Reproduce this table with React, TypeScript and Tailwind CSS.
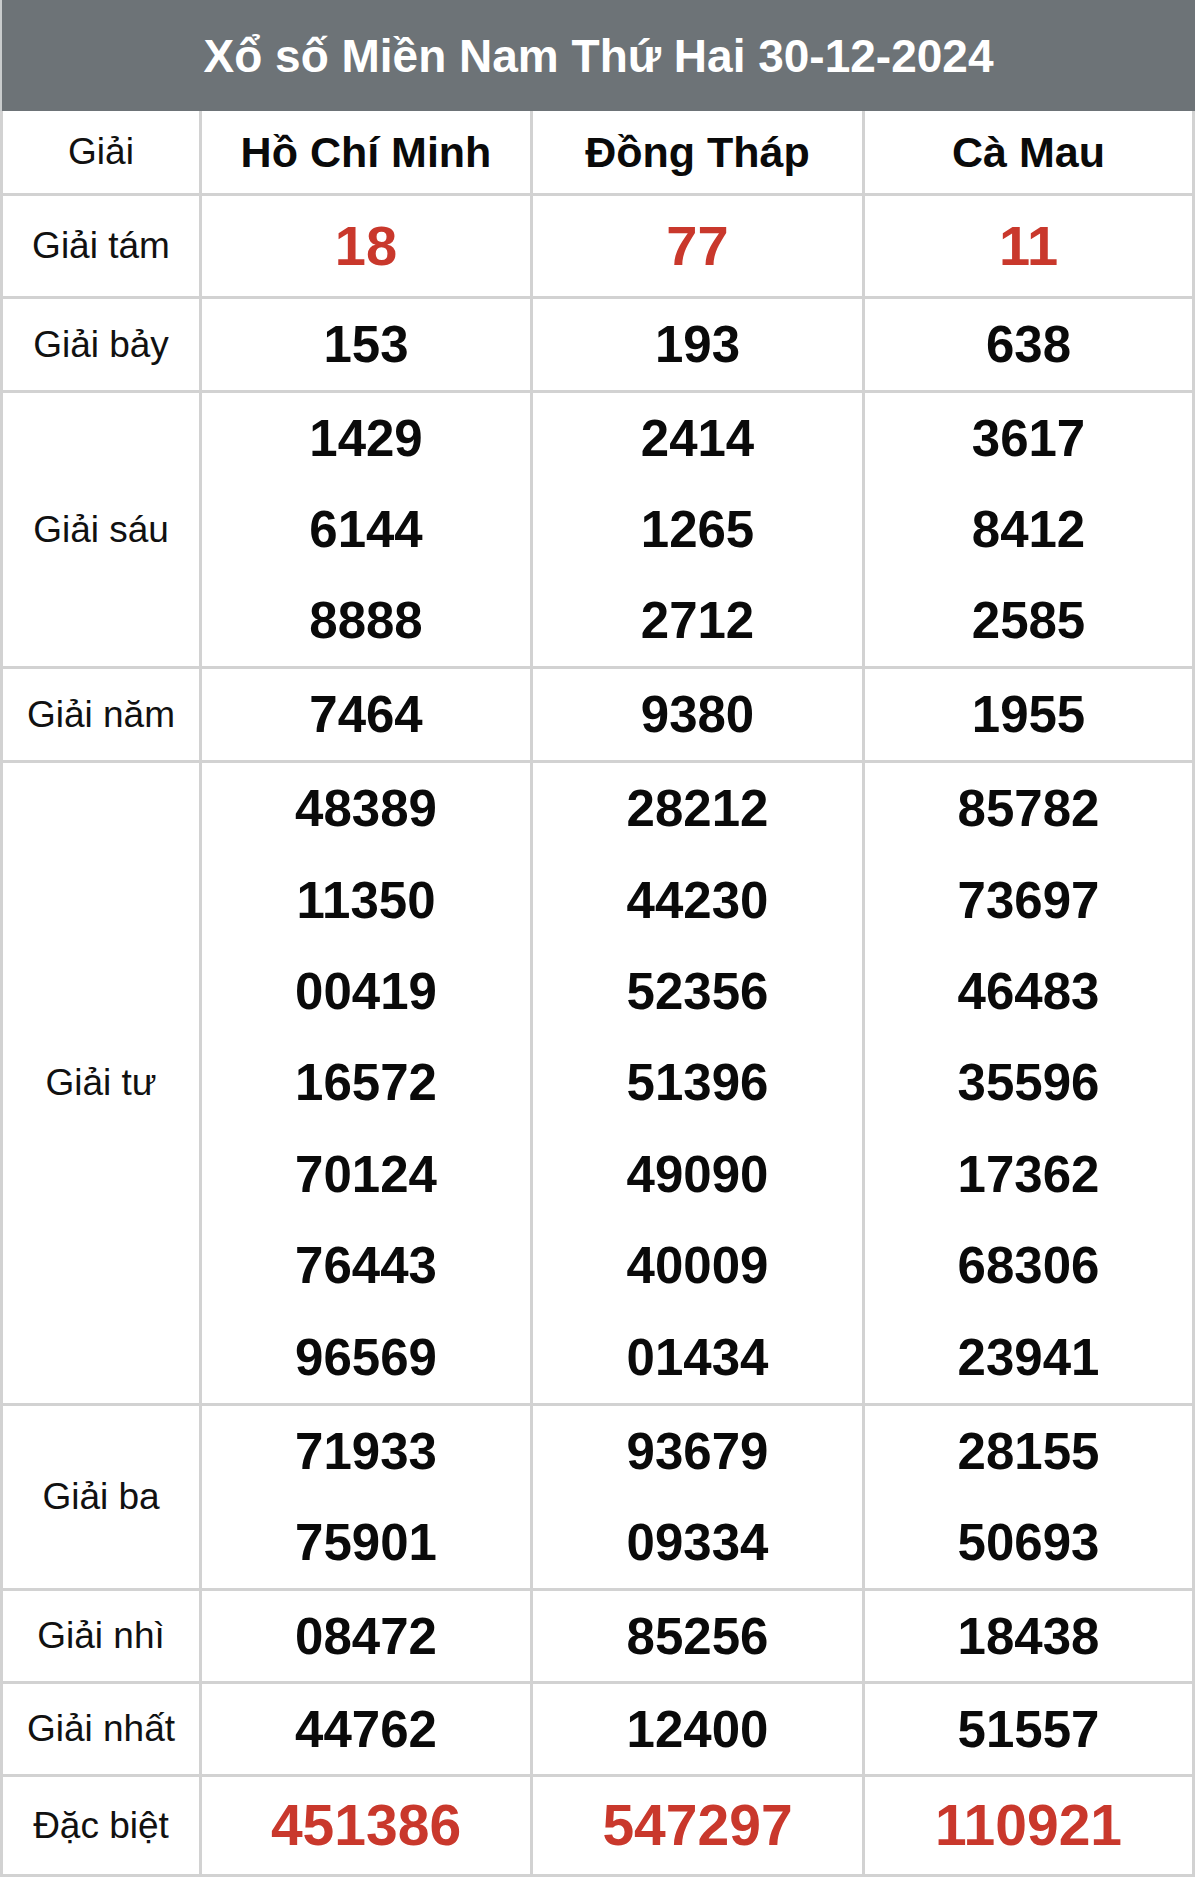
import React from "react";

type Row = {
  label: string;
  h: string;
  cols: string[][];
  red?: boolean;
  size?: string;
};

const rows: Row[] = [
  { label: "Giải tám", h: "h-[103px]", cols: [["18"], ["77"], ["11"]], red: true, size: "text-[56px]" },
  { label: "Giải bảy", h: "h-[94px]", cols: [["153"], ["193"], ["638"]] },
  {
    label: "Giải sáu",
    h: "h-[276px]",
    cols: [
      ["1429", "6144", "8888"],
      ["2414", "1265", "2712"],
      ["3617", "8412", "2585"],
    ],
  },
  { label: "Giải năm", h: "h-[94px]", cols: [["7464"], ["9380"], ["1955"]] },
  {
    label: "Giải tư",
    h: "h-[643px]",
    cols: [
      ["48389", "11350", "00419", "16572", "70124", "76443", "96569"],
      ["28212", "44230", "52356", "51396", "49090", "40009", "01434"],
      ["85782", "73697", "46483", "35596", "17362", "68306", "23941"],
    ],
  },
  {
    label: "Giải ba",
    h: "h-[185px]",
    cols: [
      ["71933", "75901"],
      ["93679", "09334"],
      ["28155", "50693"],
    ],
  },
  { label: "Giải nhì", h: "h-[93px]", cols: [["08472"], ["85256"], ["18438"]] },
  { label: "Giải nhất", h: "h-[93px]", cols: [["44762"], ["12400"], ["51557"]] },
  { label: "Đặc biệt", h: "h-[100px]", cols: [["451386"], ["547297"], ["110921"]], red: true, size: "text-[57px]" },
];

const colW = ["w-[331px]", "w-[332px]", "w-[330px]"];

export default function App() {
  return (
    <div className="w-[1200px] bg-white font-['Liberation_Sans',Arial,sans-serif]">
      <div className="w-[1195px]">
        <div className="h-[111px] bg-[#6d7377] border-l-2 border-[#c9cccd] flex items-center justify-center text-white font-bold text-[46px] leading-none">
          Xổ số Miền Nam Thứ Hai 30-12-2024
        </div>
        <div className="border-l-[3px] border-[#d2d2d2]">
          <div className="h-[85px] flex border-b-[3px] border-[#d2d2d2]">
            <div className="w-[199px] border-r-[3px] border-[#d2d2d2] flex items-center justify-center text-[37px] text-[#111]">
              Giải
            </div>
            {["Hồ Chí Minh", "Đồng Tháp", "Cà Mau"].map((p, i) => (
              <div
                key={p}
                className={`${colW[i]} border-r-[3px] border-[#d2d2d2] flex items-center justify-center text-[43px] font-bold text-[#0a0a0a]`}
              >
                {p}
              </div>
            ))}
          </div>
          {rows.map((r) => (
            <div key={r.label} className={`${r.h} flex border-b-[3px] border-[#d2d2d2]`}>
              <div className="w-[199px] border-r-[3px] border-[#d2d2d2] flex items-center justify-center text-[37px] text-[#111]">
                {r.label}
              </div>
              {r.cols.map((nums, i) => (
                <div
                  key={i}
                  className={`${colW[i]} border-r-[3px] border-[#d2d2d2] flex flex-col justify-around items-center font-bold leading-none ${
                    r.red ? "text-[#c9382c]" : "text-[#0a0a0a]"
                  } ${r.size ?? "text-[51px]"}`}
                >
                  {nums.map((n, j) => (
                    <div key={j} className="flex-1 flex items-center justify-center">
                      {n}
                    </div>
                  ))}
                </div>
              ))}
            </div>
          ))}
        </div>
      </div>
    </div>
  );
}
